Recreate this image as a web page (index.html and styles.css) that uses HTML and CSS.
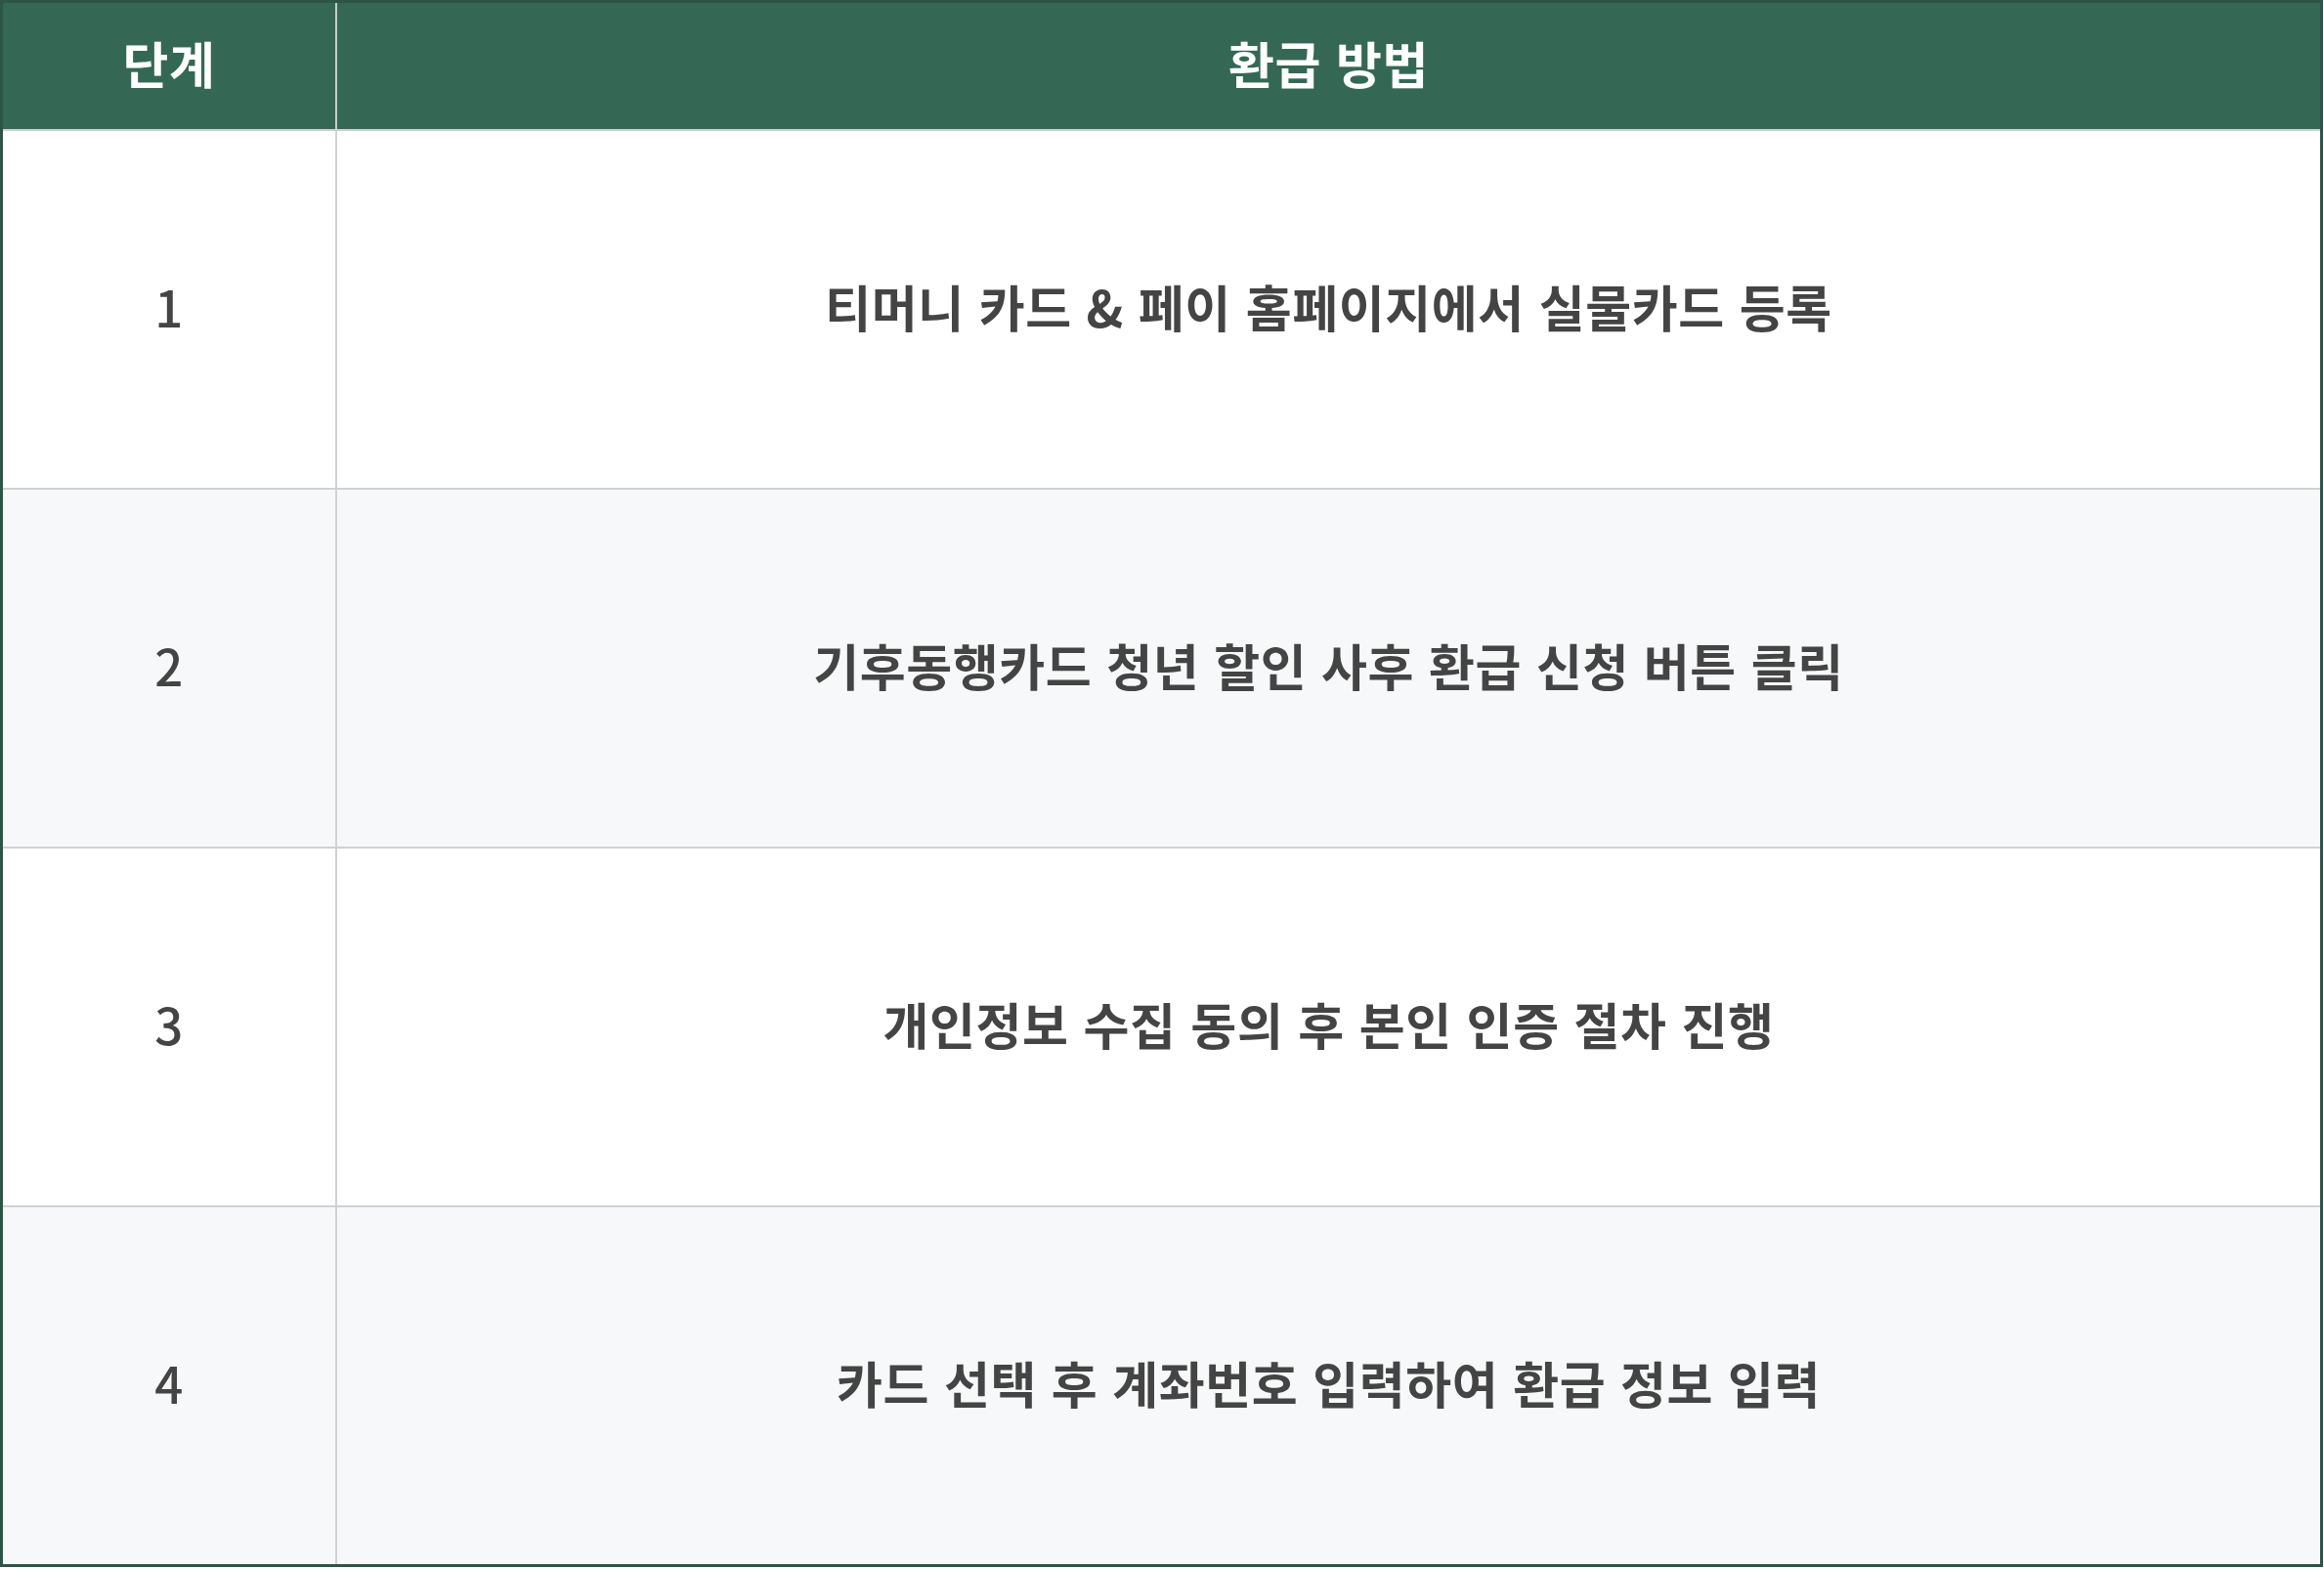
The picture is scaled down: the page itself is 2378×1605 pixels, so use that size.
FILE: index.html
```html
<!DOCTYPE html>
<html lang="ko">
<head>
<meta charset="utf-8">
<link rel="stylesheet" href="styles.css">
</head>
<body>
<div class="table">
  <div class="row head">
    <div class="cell step">단계</div>
    <div class="cell method">환급 방법</div>
  </div>
  <div class="row">
    <div class="cell step">1</div>
    <div class="cell method">티머니 카드 &amp; 페이 홈페이지에서 실물카드 등록</div>
  </div>
  <div class="row alt">
    <div class="cell step">2</div>
    <div class="cell method">기후동행카드 청년 할인 사후 환급 신청 버튼 클릭</div>
  </div>
  <div class="row">
    <div class="cell step">3</div>
    <div class="cell method">개인정보 수집 동의 후 본인 인증 절차 진행</div>
  </div>
  <div class="row alt">
    <div class="cell step">4</div>
    <div class="cell method">카드 선택 후 계좌번호 입력하여 환급 정보 입력</div>
  </div>
</div>
</body>
</html>
```
FILE: styles.css
```css
html, body {
  margin: 0;
  padding: 0;
  background: #ffffff;
}
body {
  font-family: "Noto Sans CJK KR", "Noto Sans", sans-serif;
}
.table {
  width: 2377px;
  box-sizing: border-box;
  border: 3px solid #2e5445;
  display: flex;
  flex-direction: column;
}
.row {
  display: flex;
  height: 365px;
  border-top: 2px solid #cfd1d3;
  background: #ffffff;
}
.row.alt {
  background: #f7f8fa;
}
.row.head {
  height: 129px;
  border-top: none;
  background: #356854;
}
.cell {
  display: flex;
  align-items: center;
  justify-content: center;
  box-sizing: border-box;
  padding-bottom: 8px;
  font-size: 51px;
  letter-spacing: 0.6px;
  font-weight: 700;
  color: #444444;
}
.step {
  width: 342px;
  flex: none;
  border-right: 2px solid #cfd1d3;
  font-weight: 500;
}
.method {
  flex: 1;
}
.head .cell {
  color: #ffffff;
  font-weight: 700;
}
.head .step {
  border-right-color: #c9ccce;
}
```
